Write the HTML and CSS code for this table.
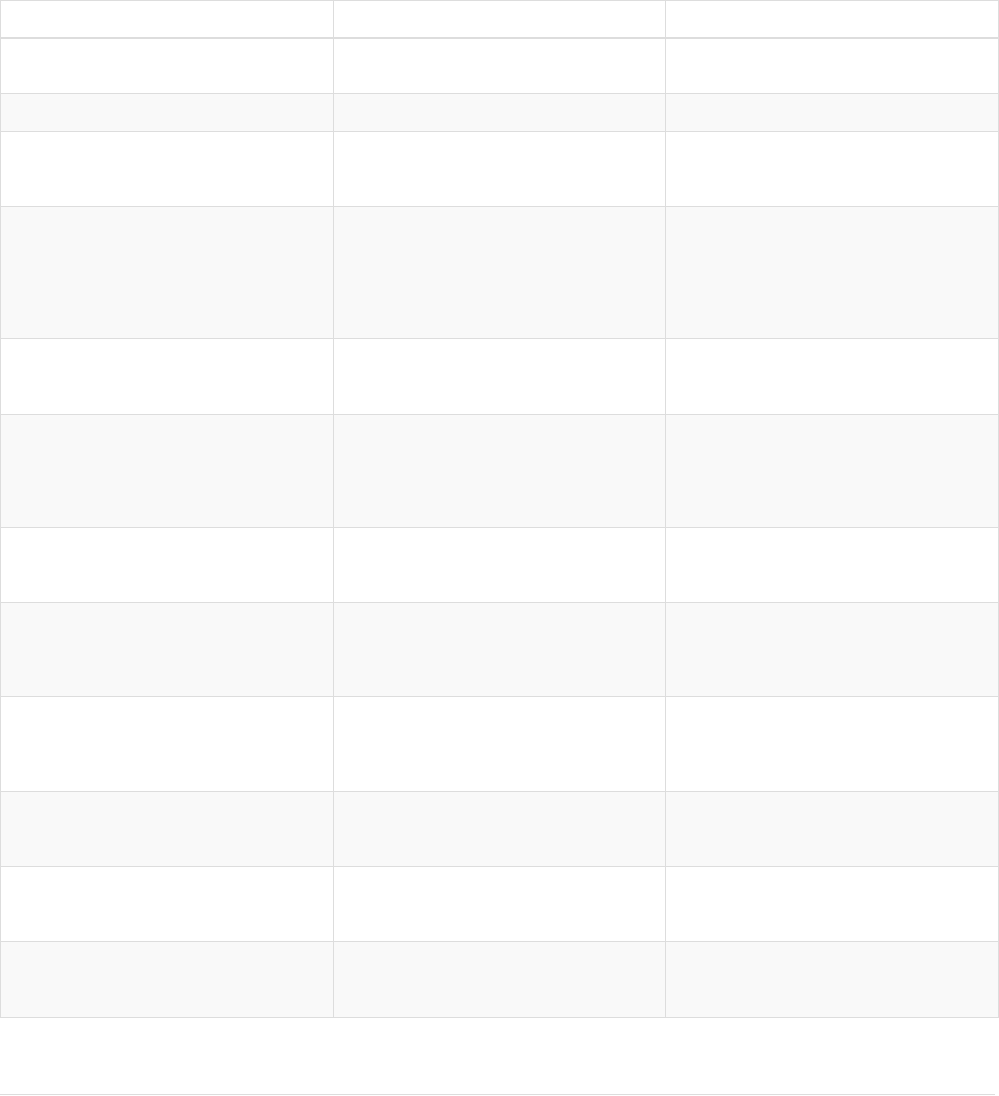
FILE: index.html
```html
<!DOCTYPE html>
<html lang="en">
<head>
  <meta charset="UTF-8">
  <meta name="viewport" content="width=device-width, initial-scale=1.0">
  <title>Table</title>
  <link rel="stylesheet" href="styles.css">
</head>
<body>
<div class="table-wrap">
  <table class="data-table">
    <thead>
      <tr>
        <th></th>
        <th></th>
        <th></th>
      </tr>
    </thead>
    <tbody>
      <tr class="h-56"><td></td><td></td><td></td></tr>
      <tr class="h-38"><td></td><td></td><td></td></tr>
      <tr class="h-75"><td></td><td></td><td></td></tr>
      <tr class="h-132"><td></td><td></td><td></td></tr>
      <tr class="h-76"><td></td><td></td><td></td></tr>
      <tr class="h-113"><td></td><td></td><td></td></tr>
      <tr class="h-75"><td></td><td></td><td></td></tr>
      <tr class="h-94"><td></td><td></td><td></td></tr>
      <tr class="h-95"><td></td><td></td><td></td></tr>
      <tr class="h-75"><td></td><td></td><td></td></tr>
      <tr class="h-75"><td></td><td></td><td></td></tr>
      <tr class="h-76"><td></td><td></td><td></td></tr>
    </tbody>
  </table>
</div>
<div class="table-footer"></div>
</body>
</html>
```

FILE: styles.css
```css
:root {
  --border-color: #DDDDDD;
  --stripe-color: #F9F9F9;
}

* {
  box-sizing: border-box;
  margin: 0;
  padding: 0;
}

body {
  font-family: 'Open Sans', sans-serif;
  background: #FFFFFF;
  color: #333333;
}

.table-wrap {
  height: 1094px;
}

.data-table {
  width: 999px;
  border-collapse: collapse;
  table-layout: fixed;
  border: 1px solid var(--border-color);
}

.data-table th,
.data-table td {
  border: 1px solid var(--border-color);
  padding: 8px;
}

.data-table thead th {
  height: 37px;
  border-bottom-width: 2px;
}

.data-table tbody tr:nth-child(even) {
  background: var(--stripe-color);
}

.h-38 { height: 38px; }
.h-56 { height: 56px; }
.h-75 { height: 75px; }
.h-76 { height: 76px; }
.h-94 { height: 94px; }
.h-95 { height: 95px; }
.h-113 { height: 113px; }
.h-132 { height: 132px; }

.table-footer {
  width: 995px;
  border-top: 1px solid var(--border-color);
}
```
